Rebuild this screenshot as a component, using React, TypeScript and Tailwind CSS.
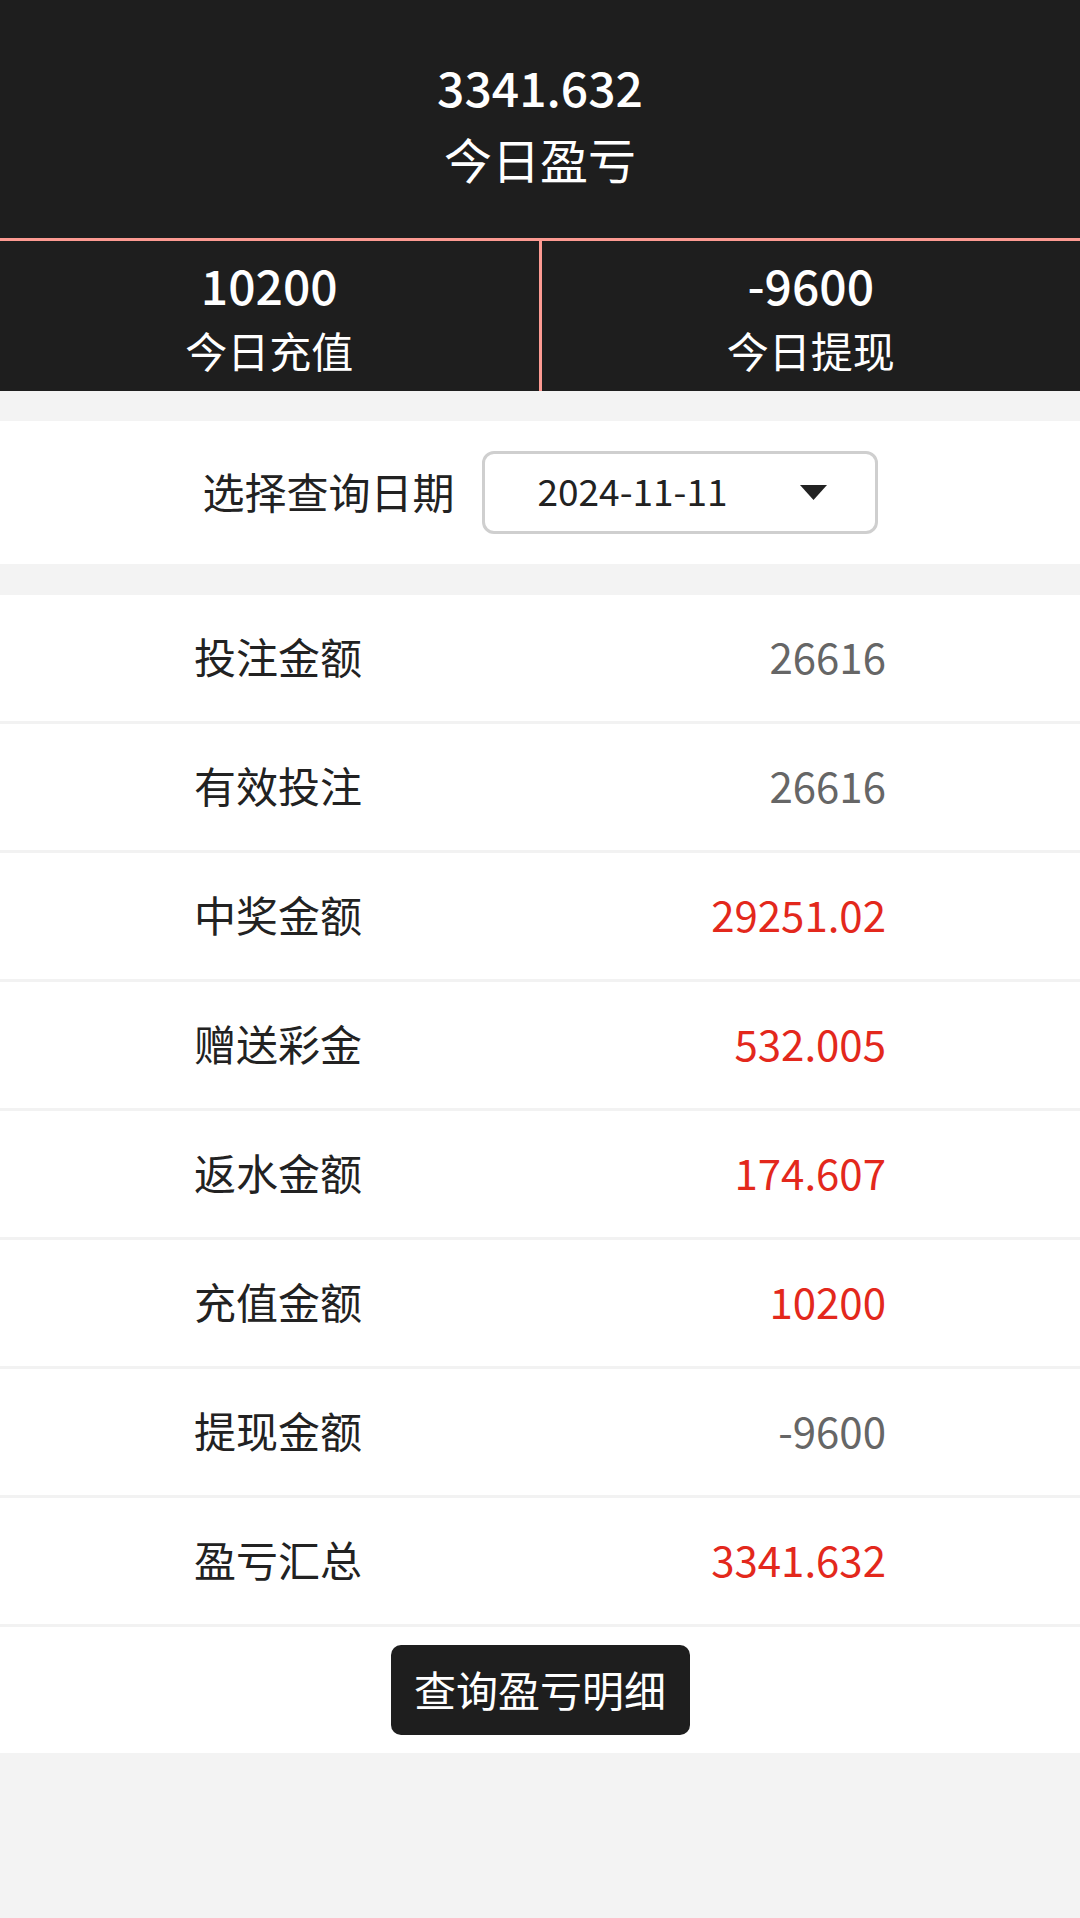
import React from 'react';

interface StatRow {
  label: string;
  value: string;
  red?: boolean;
}

const rows: StatRow[] = [
  { label: '投注金额', value: '26616' },
  { label: '有效投注', value: '26616' },
  { label: '中奖金额', value: '29251.02', red: true },
  { label: '赠送彩金', value: '532.005', red: true },
  { label: '返水金额', value: '174.607', red: true },
  { label: '充值金额', value: '10200', red: true },
  { label: '提现金额', value: '-9600' },
  { label: '盈亏汇总', value: '3341.632', red: true },
];

const font = "font-['Noto_Sans_CJK_SC','Noto_Sans',sans-serif]";

const App: React.FC = () => {
  return (
    <div className={`${font} w-[1080px] min-h-[1918px] bg-[#f3f3f3]`}>
      {/* Today summary */}
      <div className="bg-[#1e1e1e] text-white">
        <div className="flex flex-col items-center pt-[50px] h-[238px]">
          <div className="text-[48px] leading-[72px] font-medium">3341.632</div>
          <div className="text-[48px] leading-[72px]">今日盈亏</div>
        </div>
        <div className="flex border-t-[3px] border-[#fd9a92] h-[153px]">
          <div className="flex-1 flex flex-col items-center pt-[10px]">
            <div className="text-[48px] leading-[66px] font-medium">10200</div>
            <div className="text-[42px] leading-[66px]">今日充值</div>
          </div>
          <div className="w-[3px] bg-[#fd9a92]"></div>
          <div className="flex-1 flex flex-col items-center pt-[10px]">
            <div className="text-[48px] leading-[66px] font-medium">-9600</div>
            <div className="text-[42px] leading-[66px]">今日提现</div>
          </div>
        </div>
      </div>

      {/* Date picker */}
      <div className="mt-[30px] bg-white h-[143px] flex items-center justify-center gap-[27px]">
        <span className="text-[42px] text-[#222] pb-[4px]">选择查询日期</span>
        <div className="w-[396px] h-[83px] border-[3px] border-[#cfcfcf] rounded-[12px] flex items-center pl-[53px] pr-[48px]">
          <span className="flex-1 text-[37px] text-[#222] pb-[4px]">2024-11-11</span>
          <svg width="27" height="15" viewBox="0 0 27 15">
            <polygon points="0,0 27,0 13.5,15" fill="#222" />
          </svg>
        </div>
      </div>

      {/* Stats list */}
      <div className="mt-[31px] bg-white">
        {rows.map((row) => (
          <div
            key={row.label}
            className="h-[129px] border-b-[3px] border-[#f2f2f2] flex items-center justify-between px-[194px] pb-[5px]"
          >
            <span className="text-[42px] text-[#222]">{row.label}</span>
            <span className={`text-[42px] ${row.red ? 'text-[#e3281c]' : 'text-[#666]'}`}>{row.value}</span>
          </div>
        ))}
        <div className="h-[126px] flex items-center justify-center">
          <button className="h-[90px] w-[299px] bg-[#1e1e1e] text-white text-[42px] rounded-[10px] pb-[4px]">
            查询盈亏明细
          </button>
        </div>
      </div>
    </div>
  );
};

export default App;
